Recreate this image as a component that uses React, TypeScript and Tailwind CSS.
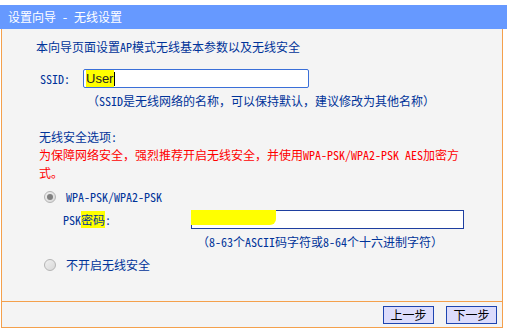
import React from 'react'

const font = "font-['Noto_Sans_Mono_CJK_SC','Noto_Sans_CJK_SC',monospace]"

function Radio({ checked }: { checked?: boolean }) {
  return (
    <span className="flex h-[12px] w-[12px] items-center justify-center rounded-full border border-[#b4b4b4] bg-gradient-to-br from-[#f0f0f0] to-[#d8d8d8]">
      {checked && <span className="h-[6px] w-[6px] rounded-full bg-[#808080]" />}
    </span>
  )
}

export default function App() {
  return (
    <div className={`h-[331px] w-[507px] overflow-hidden bg-white pt-[5px] text-[12px] leading-[18px] ${font}`}>
      <div className="flex h-[24px] items-center bg-[#6699ff] pl-[8px] text-white">
        设置向导 - 无线设置
      </div>
      <div className="ml-[1px] w-[502px] border-x border-b border-[#f4a04c] bg-[#f4f4f4]">
        <div className="h-[272px] pt-[9px] text-[#003399]">
          <div className="ml-[34px]">本向导页面设置AP模式无线基本参数以及无线安全</div>

          <div className="mt-[13px] flex h-[19px] items-center">
            <span className="ml-[38px] w-[43px]">SSID:</span>
            <div className="flex h-[19px] w-[226px] items-center rounded-[2px] border border-[#3a6fd8] bg-white pl-[2px]">
              <span className="bg-[#ffff00] pr-[1px] font-['Liberation_Sans',sans-serif] text-[13px] leading-[17px] text-[#222]">
                User
              </span>
              <span className="h-[14px] w-[1px] bg-black" />
            </div>
          </div>
          <div className="ml-[85px] mt-[4px]">（SSID是无线网络的名称，可以保持默认，建议修改为其他名称）</div>

          <div className="ml-[37px] mt-[18px]">无线安全选项:</div>
          <div className="ml-[37px] text-[#ff0000]">
            为保障网络安全，强烈推荐开启无线安全，并使用WPA-PSK/WPA2-PSK AES加密方
            <br />
            式。
          </div>

          <div className="mt-[6px] flex h-[18px] items-center">
            <span className="ml-[42px] w-[22px]">
              <Radio checked />
            </span>
            <span>WPA-PSK/WPA2-PSK</span>
          </div>
          <div className="mt-[4px] flex h-[19px] items-center">
            <span className="ml-[61px] w-[128px]">
              PSK<span className="bg-[#ffff00]">密码</span>:
            </span>
            <div className="relative h-[19px] w-[273px] border border-[#1e3fa0] bg-white">
              <div className="absolute left-[-1px] top-[-1px] h-[15px] w-[85px] rounded-br-[6px] bg-[#ffff00]" />
            </div>
          </div>
          <div className="ml-[195px] mt-[4px]">（8-63个ASCII码字符或8-64个十六进制字符）</div>

          <div className="mt-[5px] flex h-[18px] items-center">
            <span className="ml-[42px] w-[22px]">
              <Radio />
            </span>
            <span>不开启无线安全</span>
          </div>
        </div>
        <div className="flex h-[26px] items-center justify-end gap-[12px] border-t border-[#f4a04c] pr-[5px]">
          <button className="h-[18px] w-[51px] border border-[#1e44b0] bg-[#dcdcfc] text-[12px] leading-[16px] text-black">
            上一步
          </button>
          <button className="h-[18px] w-[51px] border border-[#1e44b0] bg-[#dcdcfc] text-[12px] leading-[16px] text-black">
            下一步
          </button>
        </div>
      </div>
    </div>
  )
}
